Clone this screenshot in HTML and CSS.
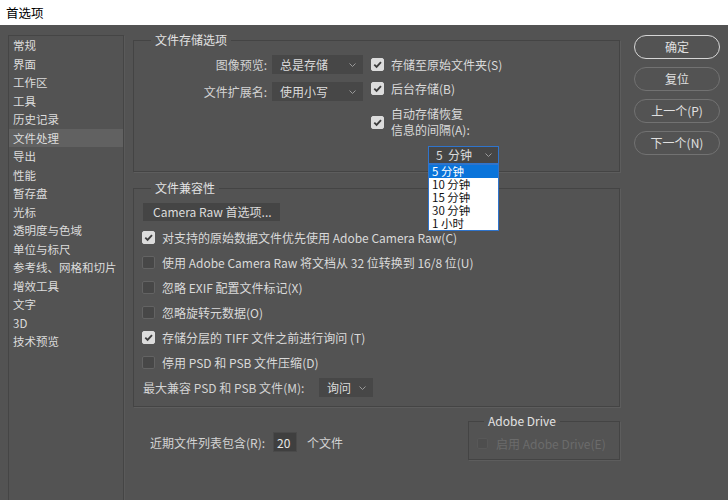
FILE: index.html
```html
<!DOCTYPE html>
<html lang="zh-CN">
<head>
<meta charset="utf-8">
<title>首选项</title>
<link rel="stylesheet" href="styles.css">
</head>
<body>
<div class="titlebar">首选项</div>
<div class="main">
  <ul class="nav">
    <li>常规</li>
    <li>界面</li>
    <li>工作区</li>
    <li>工具</li>
    <li>历史记录</li>
    <li class="active">文件处理</li>
    <li>导出</li>
    <li>性能</li>
    <li>暂存盘</li>
    <li>光标</li>
    <li>透明度与色域</li>
    <li>单位与标尺</li>
    <li>参考线、网格和切片</li>
    <li>增效工具</li>
    <li>文字</li>
    <li>3D</li>
    <li>技术预览</li>
  </ul>

  <div class="content">
    <fieldset class="group g1">
      <legend>文件存储选项</legend>
      <div class="g1-inner">
        <div class="selects">
          <div class="lbl">图像预览:</div>
          <div class="select"><span>总是存储</span><svg class="chev" viewBox="0 0 7 4"><polyline points="0.5,0.5 3.5,3.5 6.5,0.5"/></svg></div>
          <div class="lbl">文件扩展名:</div>
          <div class="select"><span>使用小写</span><svg class="chev" viewBox="0 0 7 4"><polyline points="0.5,0.5 3.5,3.5 6.5,0.5"/></svg></div>
        </div>
        <div class="checks">
          <div class="chk-row r1"><span class="cb on"><svg viewBox="0 0 12 12"><polyline points="2.5,6.2 5,8.7 9.8,3.4"/></svg></span><span>存储至原始文件夹(S)</span></div>
          <div class="chk-row r2"><span class="cb on"><svg viewBox="0 0 12 12"><polyline points="2.5,6.2 5,8.7 9.8,3.4"/></svg></span><span>后台存储(B)</span></div>
          <div class="chk-row r3"><span class="cb on"><svg viewBox="0 0 12 12"><polyline points="2.5,6.2 5,8.7 9.8,3.4"/></svg></span><span class="two">自动存储恢复<br>信息的间隔(A):</span></div>
          <div class="select interval"><span>5&nbsp; 分钟</span><svg class="chev" viewBox="0 0 7 4"><polyline points="0.5,0.5 3.5,3.5 6.5,0.5"/></svg>
            <ul class="dropdown">
              <li class="sel">5 分钟</li>
              <li>10 分钟</li>
              <li>15 分钟</li>
              <li>30 分钟</li>
              <li>1 小时</li>
            </ul>
          </div>
        </div>
      </div>
    </fieldset>

    <fieldset class="group g2">
      <legend>文件兼容性</legend>
      <div class="crbtn">Camera Raw 首选项...</div>
      <div class="rows">
        <div class="row"><span class="cb on"><svg viewBox="0 0 12 12"><polyline points="2.5,6.2 5,8.7 9.8,3.4"/></svg></span><span>对支持的原始数据文件优先使用 Adobe Camera Raw(C)</span></div>
        <div class="row"><span class="cb"></span><span>使用 Adobe Camera Raw 将文档从 32 位转换到 16/8 位(U)</span></div>
        <div class="row"><span class="cb"></span><span>忽略 EXIF 配置文件标记(X)</span></div>
        <div class="row"><span class="cb"></span><span>忽略旋转元数据(O)</span></div>
        <div class="row"><span class="cb on"><svg viewBox="0 0 12 12"><polyline points="2.5,6.2 5,8.7 9.8,3.4"/></svg></span><span>存储分层的 TIFF 文件之前进行询问 (T)</span></div>
        <div class="row"><span class="cb"></span><span>停用 PSD 和 PSB 文件压缩(D)</span></div>
        <div class="row compat"><span class="clbl">最大兼容 PSD 和 PSB 文件(M):</span><div class="select small"><span>询问</span><svg class="chev" viewBox="0 0 7 4"><polyline points="0.5,0.5 3.5,3.5 6.5,0.5"/></svg></div></div>
      </div>
    </fieldset>

    <div class="bottom">
      <div class="recent">
        <span>近期文件列表包含(R):</span>
        <span class="num">20</span>
        <span>个文件</span>
      </div>
      <fieldset class="group drive">
        <legend>Adobe Drive</legend>
        <div class="drow"><span class="cb dis"></span><span>启用 Adobe Drive(E)</span></div>
      </fieldset>
    </div>
  </div>

  <div class="buttons">
    <div class="btn primary">确定</div>
    <div class="btn">复位</div>
    <div class="btn">上一个(P)</div>
    <div class="btn">下一个(N)</div>
  </div>
</div>
</body>
</html>
```

FILE: styles.css
```css
* { box-sizing: border-box; }
html, body { margin: 0; padding: 0; }
body {
  width: 728px;
  height: 500px;
  overflow: hidden;
  background: #535353;
  font-family: "Noto Sans CJK SC", "Noto Sans", sans-serif;
  font-size: 12px;
  color: #dadada;
}

.titlebar {
  height: 25px;
  background: #ffffff;
  color: #000000;
  font-size: 12.5px;
  line-height: 25px;
  padding-left: 6px;
}

.main {
  display: flex;
  align-items: flex-start;
  padding-left: 8px;
}

.nav {
  list-style: none;
  margin: 10px 0 0 0;
  padding: 0;
  width: 116px;
  height: 480px;
  border: 1px solid #454545;
  box-shadow: 1px 1px 0 #5a5a5a;
  font-size: 11.5px;
  color: #dcdcdc;
}
.nav li {
  height: 18.5px;
  line-height: 18.5px;
  padding-left: 4px;
  white-space: nowrap;
}
.nav li.active { background: #616161; }

.content {
  width: 487px;
  margin-left: 9px;
  margin-top: 7px;
}

fieldset.group {
  margin: 0;
  padding: 7px 0 7px 0;
  border: 1px solid #444444;
  box-shadow: 1px 1px 0 #5d5d5d;
  min-width: 0;
}
fieldset.group legend {
  margin-left: 17px;
  padding: 0 4px;
  line-height: 16px;
  font-size: 12px;
  color: #e2e2e2;
}

.g1-inner { display: flex; }
.selects {
  display: grid;
  grid-template-columns: 133px 91px;
  column-gap: 5px;
  row-gap: 8px;
  align-content: start;
}
.lbl {
  text-align: right;
  line-height: 19px;
  color: #d4d4d4;
}
.select {
  height: 19px;
  background: #474747;
  display: flex;
  align-items: center;
  justify-content: space-between;
  padding: 0 7px 0 8px;
  color: #dcdcdc;
  line-height: 19px;
}
.chev {
  width: 7px;
  height: 4px;
  fill: none;
  stroke: #9a9a9a;
  stroke-width: 1;
}

.checks {
  margin-left: 8px;
  display: flex;
  flex-direction: column;
}
.chk-row {
  display: flex;
  align-items: center;
  gap: 7px;
}
.chk-row.r1 { height: 18px; }
.chk-row.r2 { height: 18px; margin-top: 6px; }
.chk-row.r3 { margin-top: 9px; }
.two { line-height: 16px; }

.cb {
  width: 13px;
  height: 13px;
  flex: none;
  border-radius: 2px;
  background: #474747;
  border: 1px solid #636363;
  display: flex;
  align-items: center;
  justify-content: center;
}
.cb.on {
  background: #dcdcdc;
  border-color: #dcdcdc;
}
.cb svg {
  width: 11px;
  height: 11px;
  fill: none;
  stroke: #3c3c3c;
  stroke-width: 2;
}
.cb.dis {
  width: 11px;
  height: 11px;
  background: #4e4e4e;
  border-color: #585858;
}

.select.interval {
  position: relative;
  margin-top: 8px;
  margin-left: 57px;
  width: 71px;
  height: 18px;
  line-height: 16px;
  border: 1px solid #2f74cc;
  background: #464646;
  padding: 0 6px 0 7px;
}
.dropdown {
  position: absolute;
  top: 17px;
  left: -1px;
  width: 71px;
  margin: 0;
  padding: 0;
  list-style: none;
  background: #ffffff;
  border: 1px solid #2f74cc;
  z-index: 5;
}
.dropdown li {
  height: 13px;
  line-height: 13px;
  padding-left: 3px;
  color: #111111;
  font-size: 11.5px;
}
.dropdown li.sel {
  background: #0a74da;
  color: #ffffff;
}

.crbtn {
  margin-left: 9px;
  width: 137px;
  height: 18px;
  line-height: 18px;
  background: #454545;
  padding-left: 10px;
  color: #dcdcdc;
}
.g2 { margin-top: 8px !important; padding-bottom: 6px !important; }
.rows { margin-top: 4px; }
.row {
  height: 25px;
  display: flex;
  align-items: center;
  gap: 7px;
  padding-left: 8px;
  white-space: nowrap;
}
.row.compat { padding-left: 9px; gap: 0; }
.clbl { width: 176px; color: #d4d4d4; }
.select.small { width: 54px; }

.bottom {
  display: flex;
  align-items: flex-start;
}
.recent {
  margin-top: 25px;
  padding-left: 17px;
  display: flex;
  align-items: center;
  color: #d4d4d4;
}
.num {
  width: 24px;
  height: 20px;
  line-height: 20px;
  margin: 0 10px 0 8px;
  background: #3f3f3f;
  border: 1px solid #4a4a4a;
  padding-left: 3px;
  color: #e8e8e8;
}
fieldset.group.drive {
  margin-left: auto;
  margin-top: 6px;
  width: 152px;
  padding: 6px 0 8px 8px;
}
fieldset.group.drive legend { margin-left: 7px; }
.drow {
  display: flex;
  align-items: center;
  gap: 8px;
  height: 16px;
  color: #6b6b6b;
}

.buttons {
  margin-left: 14px;
  margin-top: 10px;
  width: 86px;
  display: flex;
  flex-direction: column;
  gap: 8px;
}
.btn {
  height: 24px;
  border-radius: 12px;
  border: 1px solid #727272;
  text-align: center;
  line-height: 22px;
  color: #e0e0e0;
  font-size: 12px;
}
.btn.primary {
  border: 1.5px solid #d6d6d6;
  line-height: 21px;
}
```
